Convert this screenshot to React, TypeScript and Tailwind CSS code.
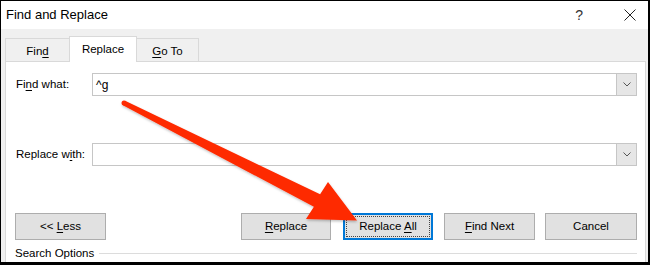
import type { ReactNode } from "react";

function Mn({ children }: { children: ReactNode }) {
  return <span className="underline decoration-1 underline-offset-[2px]">{children}</span>;
}

function Chevron() {
  return (
    <svg width="8" height="5" viewBox="0 0 8 5" fill="none">
      <path d="M0.5 0.5L4 4L7.5 0.5" stroke="#555" strokeWidth="1" />
    </svg>
  );
}

function Combo({ value }: { value?: string }) {
  return (
    <div className="flex h-[23px] flex-1 border border-[#c6c6c6] bg-white">
      <div className="flex flex-1 items-center pl-[3px] text-[12px] text-black">{value}</div>
      <div className="flex w-[20px] items-center justify-center border-l border-[#c6c6c6] bg-[#e6e6e6]">
        <Chevron />
      </div>
    </div>
  );
}

function Btn({ w, children, focused }: { w: string; children: ReactNode; focused?: boolean }) {
  if (focused) {
    return (
      <div className={`${w} flex h-[27px] items-center justify-center border-2 border-[#0078d7] bg-[#e1e1e1] p-px`}>
        <div className="flex h-full w-full items-center justify-center border border-dotted border-[#444]">
          <span className="whitespace-pre">{children}</span>
        </div>
      </div>
    );
  }
  return (
    <div className={`${w} flex h-[27px] items-center justify-center border border-[#adadad] bg-[#e1e1e1]`}>
      <span className="whitespace-pre">{children}</span>
    </div>
  );
}

function Arrow() {
  return (
    <svg
      className="pointer-events-none absolute left-[-1px] top-[-1px]"
      width="650"
      height="265"
      viewBox="0 0 650 265"
    >
      <defs>
        <filter id="sh" x="-10%" y="-10%" width="120%" height="130%">
          <feDropShadow dx="0.5" dy="1.5" stdDeviation="1" floodColor="#000" floodOpacity="0.25" />
        </filter>
      </defs>
      <g filter="url(#sh)" fill="#fe2a00">
        <polygon points="125.1,100.8 320.1,194.2 328,182 357,220.5 306,219 313.9,206.8 122.9,105.2" />
        <circle cx="124" cy="103" r="2.5" />
      </g>
    </svg>
  );
}

export default function App() {
  return (
    <div className="relative flex h-[265px] w-[650px] flex-col overflow-hidden border-b-[3px] border-l border-r-2 border-t border-black bg-[#f0f0f0] font-['Liberation_Sans',Arial,sans-serif] text-[11.5px] text-black">
      {/* title bar */}
      <div className="flex h-[28px] shrink-0 items-center bg-white pl-[5px]">
        <span className="text-[13px]">Find and Replace</span>
        <span className="ml-auto text-[14px] text-[#333]">?</span>
        <svg className="ml-[41px] mr-[12px]" width="12" height="12" viewBox="0 0 12 12">
          <path d="M0.5 0.5L11.5 11.5M11.5 0.5L0.5 11.5" stroke="#222" strokeWidth="1" />
        </svg>
      </div>

      {/* tabs */}
      <div className="flex h-[32px] shrink-0 items-end pl-[4px]">
        <div className="flex h-[23px] w-[64px] items-center justify-center border-l border-t border-[#d9d9d9] pt-[3px]">
          <span>
            Fin<Mn>d</Mn>
          </span>
        </div>
        <div className="relative z-10 -mb-px flex h-[26px] w-[68px] items-center justify-center border-l border-r border-t border-[#d9d9d9] bg-white pt-px">
          <span>Replace</span>
        </div>
        <div className="flex h-[23px] w-[62px] items-center justify-center border-r border-t border-[#d9d9d9] pt-[3px]">
          <span className="whitespace-pre">
            <Mn>G</Mn>o To
          </span>
        </div>
      </div>

      {/* panel */}
      <div className="ml-[4px] flex w-[641px] flex-1 flex-col border-l border-r border-t border-[#d9d9d9] bg-white">
        <div className="mt-[11px] flex items-center pl-[10px] pr-[8px]">
          <span className="w-[76px]">
            Fi<Mn>n</Mn>d what:
          </span>
          <Combo value="^g" />
        </div>

        <div className="mt-[47px] flex items-center pl-[10px] pr-[8px]">
          <span className="w-[76px]">
            Replace w<Mn>i</Mn>th:
          </span>
          <Combo />
        </div>

        <div className="mt-[47px] flex items-center pl-[9px] pr-[8px]">
          <Btn w="w-[91px]">
            {"<< "}
            <Mn>L</Mn>ess
          </Btn>
          <div className="flex-1" />
          <Btn w="w-[90px]">
            <Mn>R</Mn>eplace
          </Btn>
          <div className="ml-[12px]">
            <Btn w="w-[90px]" focused>
              {"Replace "}
              <Mn>A</Mn>ll
            </Btn>
          </div>
          <div className="ml-[11px]">
            <Btn w="w-[91px]">
              <Mn>F</Mn>ind Next
            </Btn>
          </div>
          <div className="ml-[10px]">
            <Btn w="w-[92px]">Cancel</Btn>
          </div>
        </div>

        <div className="mt-[5px] flex items-center pl-[9px] pr-[8px]">
          <span>Search Options</span>
          <div className="ml-[5px] h-px flex-1 bg-[#dcdcdc]" />
        </div>
      </div>

      <Arrow />
    </div>
  );
}
